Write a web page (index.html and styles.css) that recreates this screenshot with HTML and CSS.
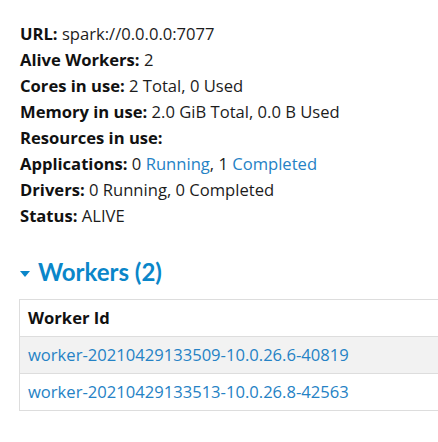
FILE: index.html
```html
<!DOCTYPE html>
<html>
<head>
<meta charset="utf-8">
<link rel="stylesheet" href="styles.css">
</head>
<body>
<div class="page">
  <ul class="summary">
    <li><strong>URL:</strong> spark://0.0.0.0:7077</li>
    <li><strong>Alive Workers:</strong> 2</li>
    <li><strong>Cores in use:</strong> 2 Total, 0 Used</li>
    <li><strong>Memory in use:</strong> 2.0 GiB Total, 0.0 B Used</li>
    <li><strong>Resources in use:</strong></li>
    <li><strong>Applications:</strong> 0 <a href="#">Running</a>, 1 <a href="#">Completed</a></li>
    <li><strong>Drivers:</strong> 0 Running, 0 Completed</li>
    <li><strong>Status:</strong> ALIVE</li>
  </ul>
  <h4 class="section-title">
    <svg class="arrow" width="10" height="6" viewBox="0 0 10 6"><polygon points="0,0 10,0 5,6" fill="#0a86c9"/></svg>
    <span>Workers (2)</span>
  </h4>
  <table class="workers">
    <thead>
      <tr><th>Worker Id</th></tr>
    </thead>
    <tbody>
      <tr class="odd"><td><a href="#">worker-20210429133509-10.0.26.6-40819</a></td></tr>
      <tr><td><a href="#">worker-20210429133513-10.0.26.8-42563</a></td></tr>
    </tbody>
  </table>
</div>
</body>
</html>
```

FILE: styles.css
```css
html, body {
  margin: 0;
  padding: 0;
  background: #ffffff;
  overflow: hidden;
}
body {
  font-family: "Open Sans", "Noto Sans", sans-serif;
  font-size: 16.6px;
  line-height: 26px;
  color: #1c1c1c;
}
.page {
  padding: 21px 0 0 20px;
}
.summary {
  list-style: none;
  margin: 0;
  padding: 0;
}
.summary strong {
  font-weight: 700;
  color: #111111;
}
a {
  color: #2582c5;
  text-decoration: none;
}
.section-title {
  display: flex;
  align-items: center;
  margin: 28px 0 12px 0;
  font-family: "Lato", "Open Sans", sans-serif;
  font-size: 24px;
  line-height: 30px;
  font-weight: 700;
  color: #0a86c9;
}
.arrow {
  margin-right: 8px;
  margin-top: 3px;
}
.workers {
  border-collapse: collapse;
  width: calc(100% + 4px);
  margin-left: -1px;
  border: 1px solid #dddddd;
}
.workers th,
.workers td {
  text-align: left;
  padding: 5px 8px;
  border-top: 1px solid #dddddd;
}
.workers th {
  font-weight: 700;
  color: #111111;
}
.workers tr.odd td {
  background: #f2f2f2;
}
```
